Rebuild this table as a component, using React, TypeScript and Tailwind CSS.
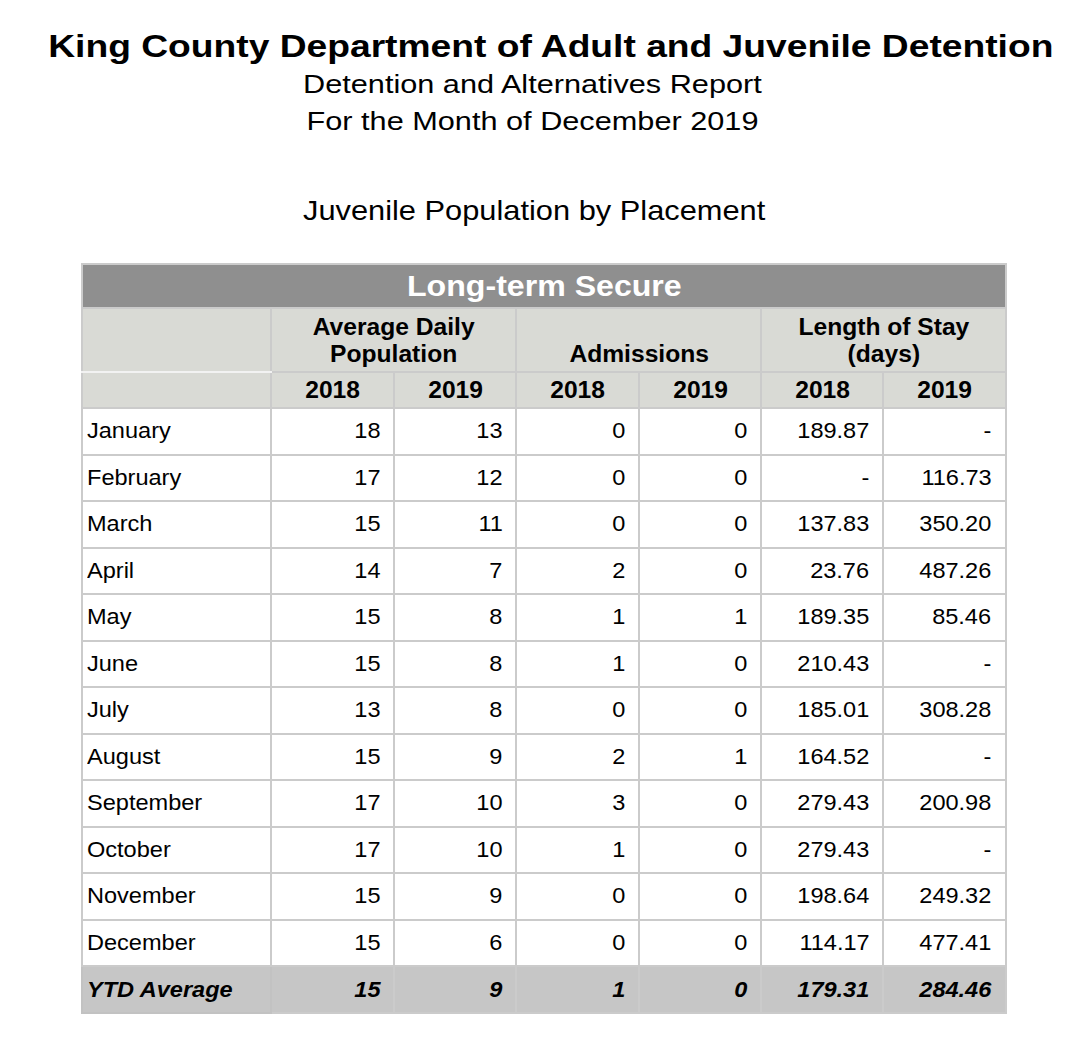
import React from 'react';

type Row = [string, string, string, string, string, string, string];

const rows: Row[] = [
  ['January', '18', '13', '0', '0', '189.87', '-'],
  ['February', '17', '12', '0', '0', '-', '116.73'],
  ['March', '15', '11', '0', '0', '137.83', '350.20'],
  ['April', '14', '7', '2', '0', '23.76', '487.26'],
  ['May', '15', '8', '1', '1', '189.35', '85.46'],
  ['June', '15', '8', '1', '0', '210.43', '-'],
  ['July', '13', '8', '0', '0', '185.01', '308.28'],
  ['August', '15', '9', '2', '1', '164.52', '-'],
  ['September', '17', '10', '3', '0', '279.43', '200.98'],
  ['October', '17', '10', '1', '0', '279.43', '-'],
  ['November', '15', '9', '0', '0', '198.64', '249.32'],
  ['December', '15', '6', '0', '0', '114.17', '477.41'],
];

const ytd: Row = ['YTD Average', '15', '9', '1', '0', '179.31', '284.46'];

const cell = 'border-2 border-[#cbcbcb] text-right pr-[13px] text-[22px] leading-[26px]';
const headCell = 'border-2 border-[#cbcbcb] bg-[#d9dad5] font-bold text-[23px] text-center';

// the source pdf renders text a bit wider than Arial metrics
const Wide = ({ children, origin = 'origin-right' }: { children: React.ReactNode; origin?: string }) => (
  <span className={`inline-block scale-x-[1.07] ${origin}`}>{children}</span>
);

const App: React.FC = () => {
  return (
    <div className="w-[1080px] min-h-[1048px] bg-white text-black font-['Liberation_Sans',Arial,sans-serif]">
      {/* Report heading */}
      <div className="flex flex-col items-center pt-[28px]">
        <h1 className="text-[31px] font-bold leading-[38px] scale-x-[1.2] whitespace-nowrap ml-[21px]">
          King County Department of Adult and Juvenile Detention
        </h1>
        <div className="text-[26px] leading-[37px] scale-x-[1.18] whitespace-nowrap mr-[16px]">Detention and Alternatives Report</div>
        <div className="text-[26px] leading-[37px] scale-x-[1.18] whitespace-nowrap mr-[16px]">For the Month of December 2019</div>
        <div className="text-[28px] leading-[32px] mt-[55px] scale-x-[1.1] whitespace-nowrap mr-[12px]">Juvenile Population by Placement</div>
      </div>

      {/* Table */}
      <div className="flex justify-center pl-[8px] mt-[36px]">
        <table className="border-collapse border-2 border-[#cbcbcb] w-[923px] table-fixed">
          <colgroup>
            <col className="w-[189px]" />
            <col className="w-[123px]" />
            <col className="w-[122px]" />
            <col className="w-[123px]" />
            <col className="w-[122px]" />
            <col className="w-[122px]" />
            <col className="w-[122px]" />
          </colgroup>
          <thead>
            <tr className="h-[44px]">
              <th colSpan={7} className="bg-[#8f8f8f] text-white text-[30px] leading-[34px] font-bold border-2 border-[#cbcbcb]">
                <Wide origin="origin-center">Long-term Secure</Wide>
              </th>
            </tr>
            <tr className="h-[64px]">
              <th className="bg-[#d9dad5] border-2 border-[#cbcbcb] border-b-[#f2f2f2]"></th>
              <th colSpan={2} className={`${headCell} align-bottom leading-[27px] pb-[3px]`}>
                <Wide origin="origin-center">
                  Average Daily
                  <br />
                  Population
                </Wide>
              </th>
              <th colSpan={2} className={`${headCell} align-bottom leading-[27px] pb-[3px]`}>
                <Wide origin="origin-center">Admissions</Wide>
              </th>
              <th colSpan={2} className={`${headCell} align-bottom leading-[27px] pb-[3px]`}>
                <Wide origin="origin-center">
                  Length of Stay
                  <br />
                  (days)
                </Wide>
              </th>
            </tr>
            <tr className="h-[36px]">
              <th className="bg-[#d9dad5] border-2 border-[#cbcbcb] border-t-[#f2f2f2]"></th>
              {['2018', '2019', '2018', '2019', '2018', '2019'].map((y, i) => (
                <th key={i} className={`${headCell} leading-[26px]`}>
                  <Wide origin="origin-center">{y}</Wide>
                </th>
              ))}
            </tr>
          </thead>
          <tbody>
            {rows.map((r) => (
              <tr key={r[0]} className="h-[46.5px]">
                <td className="border-2 border-[#cbcbcb] pl-[4px] text-[22px] leading-[26px]">
                  <Wide origin="origin-left">{r[0]}</Wide>
                </td>
                {r.slice(1).map((v, i) => (
                  <td key={i} className={cell}>
                    <Wide>{v}</Wide>
                  </td>
                ))}
              </tr>
            ))}
            <tr className="h-[47px] bg-[#c6c6c6] font-bold italic">
              <td className="border-2 border-[#c2c2c2] pl-[4px] text-[22px] leading-[26px]">
                <Wide origin="origin-left">{ytd[0]}</Wide>
              </td>
              {ytd.slice(1).map((v, i) => (
                <td key={i} className={`${cell} border-[#c2c2c2]`}>
                  <Wide>{v}</Wide>
                </td>
              ))}
            </tr>
          </tbody>
        </table>
      </div>
    </div>
  );
};

export default App;
